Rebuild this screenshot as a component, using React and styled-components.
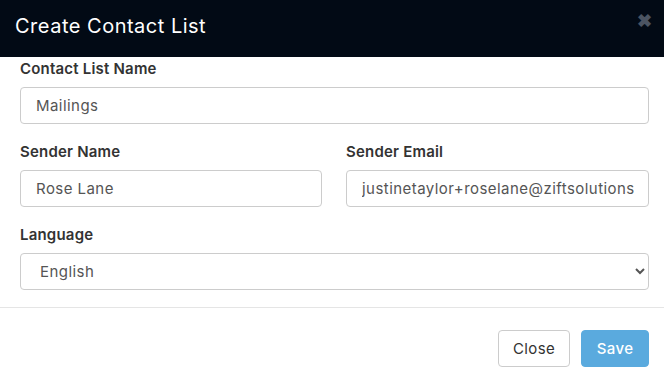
import React from 'react';
import styled, { createGlobalStyle } from 'styled-components';

const GlobalStyle = createGlobalStyle`
  html, body {
    margin: 0;
    padding: 0;
    background: #ffffff;
  }
  body {
    font-family: "Inter", "Noto Sans", sans-serif;
  }
  * { box-sizing: border-box; }
`;

const Modal = styled.div`
  width: 664px;
  height: 381px;
  background: #fff;
  display: flex;
  flex-direction: column;
  overflow: hidden;
`;

const Header = styled.div`
  height: 57px;
  background: #020a15;
  display: flex;
  align-items: center;
  justify-content: space-between;
  padding: 0 15px 6px 15px;
  position: relative;
`;

const Title = styled.h4`
  margin: 0;
  color: #ffffff;
  font-size: 20px;
  font-weight: 400;
  letter-spacing: 0.5px;
`;

const CloseX = styled.span`
  position: absolute;
  top: 12px;
  right: 12px;
  color: #4b5462;
  font-size: 18px;
  font-weight: 700;
  line-height: 1;
`;

const Body = styled.div`
  padding: 3px 15px 0 20px;
  display: flex;
  flex-direction: column;
  gap: 19px;
  height: 251px;
  border-bottom: 1px solid #e5e5e5;
`;

const Row = styled.div`
  display: grid;
  grid-template-columns: ${p => (p.cols === 2 ? '302px 303px' : '629px')};
  column-gap: 24px;
`;

const Field = styled.div`
  display: flex;
  flex-direction: column;
`;

const Label = styled.label`
  font-size: 15px;
  font-weight: 600;
  color: #333333;
  line-height: 18px;
  margin-bottom: 9px;
  letter-spacing: 0.2px;
`;

const Input = styled.input`
  height: 37px;
  width: 100%;
  border: 1px solid #cccccc;
  border-radius: 4px;
  padding: 0 14px 0 15px;
  font-family: "Inter", "Noto Sans", sans-serif;
  font-size: 15px;
  letter-spacing: 0.45px;
  color: #555555;
  background: #fff;
  outline: none;
`;

const Select = styled.select`
  height: 37px;
  width: 100%;
  border: 1px solid #cccccc;
  border-radius: 4px;
  padding: 0 8px 0 15px;
  font-family: "Inter", "Noto Sans", sans-serif;
  font-size: 15px;
  letter-spacing: 0.45px;
  color: #555555;
  background: #fff;
  outline: none;
`;

const Footer = styled.div`
  display: flex;
  justify-content: flex-end;
  align-items: flex-start;
  gap: 11px;
  padding: 22px 15px 0 0;
`;

const Button = styled.button`
  height: 37px;
  width: ${p => (p.primary ? '68px' : '72px')};
  padding: 0;
  border-radius: 4px;
  font-family: "Inter", "Noto Sans", sans-serif;
  font-size: 15px;
  letter-spacing: 0.4px;
  border: 1px solid ${p => (p.primary ? '#5aaade' : '#cccccc')};
  background: ${p => (p.primary ? '#5aaade' : '#ffffff')};
  color: ${p => (p.primary ? '#ffffff' : '#333333')};
  font-weight: ${p => (p.primary ? 500 : 400)};
  cursor: pointer;
`;

export default function App() {
  return (
    <>
      <GlobalStyle />
      <Modal>
        <Header>
          <Title>Create Contact List</Title>
          <CloseX>✖</CloseX>
        </Header>
        <Body>
          <Row>
            <Field>
              <Label>Contact List Name</Label>
              <Input defaultValue="Mailings" />
            </Field>
          </Row>
          <Row cols={2}>
            <Field>
              <Label>Sender Name</Label>
              <Input defaultValue="Rose Lane" />
            </Field>
            <Field>
              <Label>Sender Email</Label>
              <Input defaultValue="justinetaylor+roselane@ziftsolutions.com" />
            </Field>
          </Row>
          <Row>
            <Field>
              <Label>Language</Label>
              <Select defaultValue="en">
                <option value="en">English</option>
                <option value="fr">French</option>
                <option value="de">German</option>
              </Select>
            </Field>
          </Row>
        </Body>
        <Footer>
          <Button>Close</Button>
          <Button primary>Save</Button>
        </Footer>
      </Modal>
    </>
  );
}
